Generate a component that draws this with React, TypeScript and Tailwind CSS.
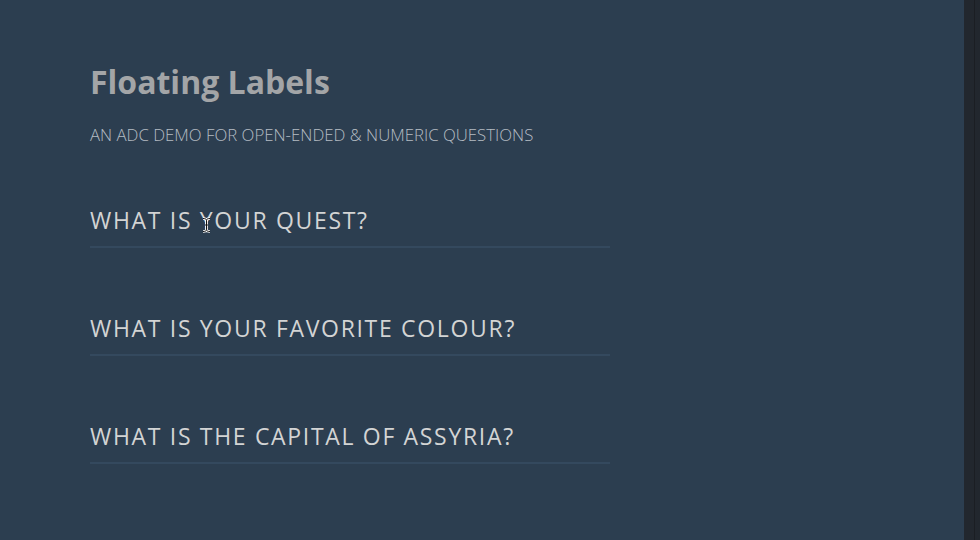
const questions = [
    'What is your quest?',
    'What is your favorite colour?',
    'What is the capital of Assyria?',
];

const IBeam = () => (
    <svg width="9" height="16" viewBox="0 0 9 16" className="absolute left-[112px] top-[12px] pointer-events-none">
        <path d="M1 1.5 C3 1.5 4.5 2 4.5 3.5 V12.5 C4.5 14 3 14.5 1 14.5 M8 1.5 C6 1.5 4.5 2 4.5 3.5 M4.5 12.5 C4.5 14 6 14.5 8 14.5 M3 8 H6" fill="none" stroke="#fff" strokeWidth="2.5" />
        <path d="M1 1.5 C3 1.5 4.5 2 4.5 3.5 V12.5 C4.5 14 3 14.5 1 14.5 M8 1.5 C6 1.5 4.5 2 4.5 3.5 M4.5 12.5 C4.5 14 6 14.5 8 14.5 M3 8 H6" fill="none" stroke="#111" strokeWidth="1" />
    </svg>
);

export default function App() {
    return (
        <div className="flex h-[540px] w-[980px] overflow-hidden bg-[#2c3e50] font-['Open_Sans',sans-serif]">
            <main className="flex-1 pl-[90px] pt-[60px]">
                <h1 className="text-[32px] font-bold leading-[44px] text-[#a3a5a7]">Floating Labels</h1>
                <p className="mt-[21px] text-[16.8px] font-light uppercase leading-5 text-[#b5bcc3]">
                    An ADC demo for open-ended &amp; numeric questions
                </p>
                <div className="mt-[60px] flex w-[520px] flex-col gap-[65px]">
                    {questions.map((q, i) => (
                        <label key={q} className="relative block border-b-2 border-[#34495e] pb-[11px]">
                            <span className="block text-[23px] uppercase leading-[30px] tracking-[0.073em] text-[#d3d4d4]">{q}</span>
                            {i === 0 && <IBeam />}
                        </label>
                    ))}
                </div>
            </main>
            <aside className="flex w-[16px] bg-[#22272e]">
                <div className="ml-[10px] w-px bg-[#1b1e23]" />
            </aside>
        </div>
    );
}
